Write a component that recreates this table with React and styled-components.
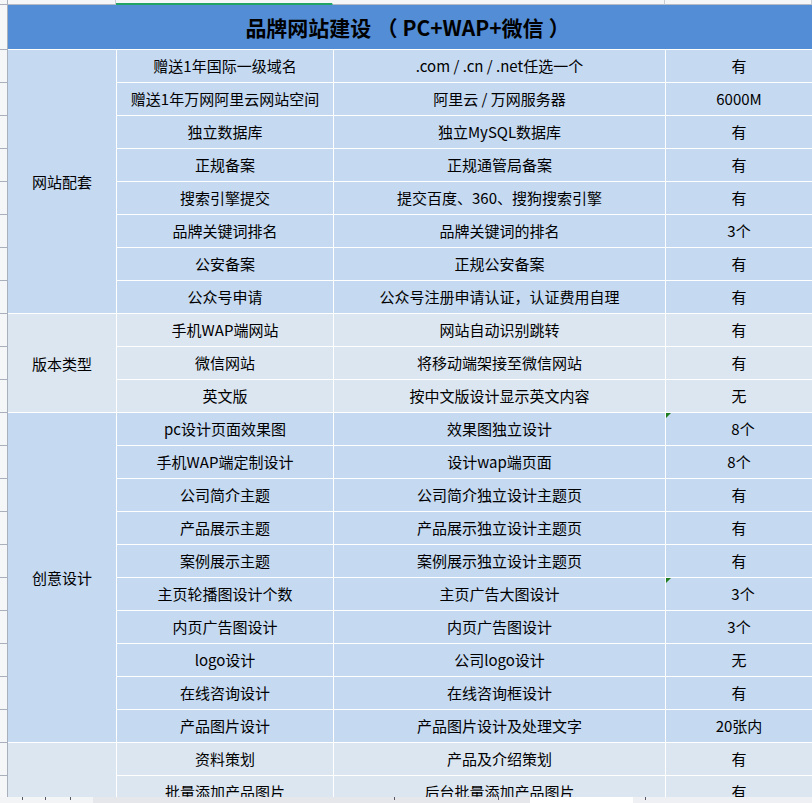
import React from "react";
import styled, { createGlobalStyle } from "styled-components";

const Global = createGlobalStyle`
  html, body { margin: 0; padding: 0; background: #fff; overflow: hidden; }
  body {
    font-family: "Noto Sans CJK SC", "Noto Sans", sans-serif;
    font-feature-settings: "chws" 0, "halt" 0, "palt" 0;
    text-spacing-trim: space-all;
  }
`;

const LIGHT = "#c5d9f1";
const PALE = "#dce6f1";

const groups = [
  {
    label: "网站配套",
    bg: LIGHT,
    rows: [
      ["赠送1年国际一级域名", ".com / .cn / .net任选一个", "有"],
      ["赠送1年万网阿里云网站空间", "阿里云 / 万网服务器", "6000M"],
      ["独立数据库", "独立MySQL数据库", "有"],
      ["正规备案", "正规通管局备案", "有"],
      ["搜索引擎提交", "提交百度、360、搜狗搜索引擎", "有"],
      ["品牌关键词排名", "品牌关键词的排名", "3个"],
      ["公安备案", "正规公安备案", "有"],
      ["公众号申请", "公众号注册申请认证，认证费用自理", "有"],
    ],
  },
  {
    label: "版本类型",
    bg: PALE,
    rows: [
      ["手机WAP端网站", "网站自动识别跳转", "有"],
      ["微信网站", "将移动端架接至微信网站", "有"],
      ["英文版", "按中文版设计显示英文内容", "无"],
    ],
  },
  {
    label: "创意设计",
    bg: LIGHT,
    rows: [
      ["pc设计页面效果图", "效果图独立设计", "8个", true],
      ["手机WAP端定制设计", "设计wap端页面", "8个"],
      ["公司简介主题", "公司简介独立设计主题页", "有"],
      ["产品展示主题", "产品展示独立设计主题页", "有"],
      ["案例展示主题", "案例展示独立设计主题页", "有"],
      ["主页轮播图设计个数", "主页广告大图设计", "3个", true],
      ["内页广告图设计", "内页广告图设计", "3个"],
      ["logo设计", "公司logo设计", "无"],
      ["在线咨询设计", "在线咨询框设计", "有"],
      ["产品图片设计", "产品图片设计及处理文字", "20张内"],
    ],
  },
  {
    label: "后台功能",
    bg: PALE,
    rows: [
      ["资料策划", "产品及介绍策划", "有"],
      ["批量添加产品图片", "后台批量添加产品图片", "有"],
      ["产品分类管理", "后台产品分类管理", "有"],
      ["新闻发布系统", "后台新闻发布管理", "有"],
      ["留言反馈管理", "后台在线留言管理", "有"],
      ["网站数据备份", "后台数据定期备份", "有"],
    ],
  },
];

const Page = styled.div`
  width: 812px;
  height: 803px;
  display: flex;
  flex-direction: column;
  overflow: hidden;
`;

const Main = styled.div`
  flex: 1;
  display: flex;
  overflow: hidden;
  min-height: 0;
`;

const Gutter = styled.div`
  width: 7px;
  flex: none;
  background: #f5f6f8;
  border-right: 1px solid #a9afbb;
  display: flex;
  flex-direction: column;
`;

const GutterCell = styled.div`
  flex: none;
  height: ${(p) => p.$h}px;
  border-bottom: 1px solid #a9afbb;
`;

const Content = styled.div`
  flex: 1;
  min-width: 0;
  display: flex;
  flex-direction: column;
`;

const ColHeads = styled.div`
  display: grid;
  grid-template-columns: 108px 217px 332px 1fr;
  height: 5px;
  flex: none;
  background: #f5f6f8;
`;

const ColHead = styled.div`
  box-sizing: border-box;
  height: 5px;
  border-right: 1px solid ${(p) => (p.$sel ? "transparent" : "#c8ccd3")};
  border-bottom: ${(p) => (p.$sel ? "2px solid #21a366" : "1px solid #b6bac2")};
`;

const Table = styled.div`
  display: flex;
  flex-direction: column;
  gap: 1px;
  background: #ffffff;
`;

const Title = styled.div`
  height: 44px;
  background: #538dd5;
  display: flex;
  align-items: center;
  justify-content: center;
  font-family: "Noto Sans CJK SC", "Noto Sans", sans-serif;
  font-weight: 700;
  font-size: 21px;
  color: #000;
`;

const Paren = styled.span`
  margin: 0 5px;
`;

const Group = styled.div`
  display: grid;
  grid-template-columns: 108px 1fr;
  gap: 1px;
`;

const GroupLabel = styled.div`
  background: ${(p) => p.$bg};
  display: flex;
  align-items: center;
  justify-content: center;
  font-size: 15px;
  color: #000;
`;

const Rows = styled.div`
  display: flex;
  flex-direction: column;
  gap: 1px;
`;

const Row = styled.div`
  display: grid;
  grid-template-columns: 216px 331px 1fr;
  gap: 1px;
  height: 32px;
`;

const Cell = styled.div`
  position: relative;
  background: ${(p) => p.$bg};
  display: flex;
  align-items: center;
  justify-content: center;
  padding-left: ${(p) => (p.$shift ? 8 : 0)}px;
  padding-bottom: 1px;
  font-size: 15px;
  color: #000;
  white-space: nowrap;
  overflow: hidden;
`;

const Marker = styled.span`
  position: absolute;
  left: 0;
  top: 0;
  width: 0;
  height: 0;
  border-top: 5px solid #1e7b1e;
  border-right: 5px solid transparent;
`;

const BottomBar = styled.div`
  height: 6px;
  flex: none;
  display: grid;
  grid-template-columns: 93px 437px 103px 1fr;
`;

const BarSeg = styled.div`
  background: ${(p) => p.$bg};
  position: relative;
`;

const Tick = styled.span`
  position: absolute;
  top: 0;
  left: ${(p) => p.$x}px;
  width: 1px;
  height: 3px;
  background: #555a66;
`;

export default function App() {
  const gutter = [{ h: 4 }, { h: 44 }];
  groups.forEach((g) => g.rows.forEach(() => gutter.push({ h: 32 })));

  return (
    <>
      <Global />
      <Page>
        <Main>
          <Gutter>
            {gutter.map((g, i) => (
              <GutterCell key={i} $h={g.h} />
            ))}
          </Gutter>
          <Content>
            <ColHeads>
              <ColHead />
              <ColHead $sel />
              <ColHead />
              <ColHead />
            </ColHeads>
            <Table>
              <Title>
                品牌网站建设<Paren>（</Paren>PC+WAP+微信<Paren>）</Paren>
              </Title>
              {groups.map((g) => (
                <Group key={g.label}>
                  <GroupLabel $bg={g.bg}>{g.label}</GroupLabel>
                  <Rows>
                    {g.rows.map((r, i) => (
                      <Row key={i}>
                        <Cell $bg={g.bg}>{r[0]}</Cell>
                        <Cell $bg={g.bg}>{r[1]}</Cell>
                        <Cell $bg={g.bg} $shift={!!r[3]}>
                          {r[3] && <Marker />}
                          {r[2]}
                        </Cell>
                      </Row>
                    ))}
                  </Rows>
                </Group>
              ))}
            </Table>
          </Content>
        </Main>
        <BottomBar>
          <BarSeg $bg="#f3f4f6">
            <Tick $x={22} />
            <Tick $x={45} />
            <Tick $x={70} />
          </BarSeg>
          <BarSeg $bg="#e6e7eb">
            <Tick $x={301} />
            <Tick $x={405} />
          </BarSeg>
          <BarSeg $bg="#ffffff" />
          <BarSeg $bg="#eff0f3">
            <Tick $x={12} />
          </BarSeg>
        </BottomBar>
      </Page>
    </>
  );
}
